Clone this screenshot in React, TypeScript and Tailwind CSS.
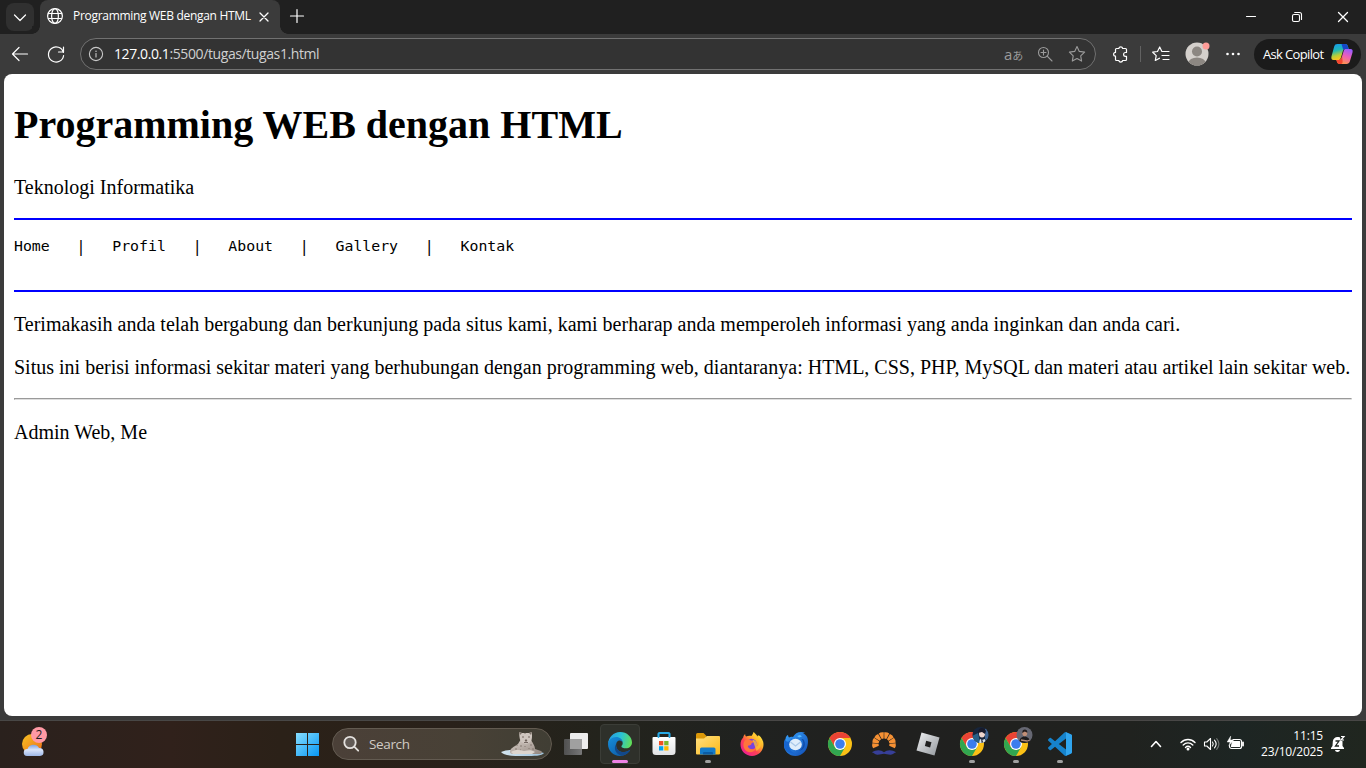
import type { ReactNode } from "react";

const ui = "font-['Open_Sans','Noto_Sans',sans-serif]";

function Line({ size = 20, w = 1.2, color = "#fff", children }: { size?: number; w?: number; color?: string; children: ReactNode }) {
  return (
    <svg width={size} height={size} viewBox={`0 0 ${size} ${size}`} fill="none" stroke={color} strokeWidth={w} strokeLinecap="round" strokeLinejoin="round" className="block shrink-0">
      {children}
    </svg>
  );
}

function TabStrip() {
  return (
    <div className="flex h-[34px] shrink-0 items-start bg-[#202020]">
      <button className="mt-[3px] ml-[6px] flex h-7 w-7 items-center justify-center rounded-lg bg-[#303030]">
        <Line><path d="M4.500 8 10 13.500l5.500-5.500" /></Line>
      </button>
      <div className="relative ml-[6px] flex h-[34px] w-[240px] items-center rounded-t-lg bg-[#3b3b3b]">
        <span className="absolute bottom-0 -left-2 h-2 w-2 bg-[radial-gradient(circle_at_0_0,#202020_7.5px,#3b3b3b_8px)]" />
        <span className="absolute -right-2 bottom-0 h-2 w-2 bg-[radial-gradient(circle_at_100%_0,#202020_7.5px,#3b3b3b_8px)]" />
        <div className="mb-[2px] ml-[5px]">
          <Line>
            <circle cx="10" cy="10" r="7.400" />
            <ellipse cx="10" cy="10" rx="3.400" ry="7.400" />
            <path d="M3.500 7.500h13M3.500 12.500h13" />
          </Line>
        </div>
        <span className={`mb-[2px] ml-[8px] w-[183px] text-[12px] leading-4 tracking-[-0.300px] whitespace-nowrap text-white ${ui}`}>Programming WEB dengan HTML</span>
        <div className="mb-[1px] ml-[2px]">
          <Line size={12} w={1.3}><path d="m2 2 8 8M10 2l-8 8" /></Line>
        </div>
      </div>
      <div className="mt-[6px] ml-[7px]">
        <Line w={1.2}><path d="M10 3.500v13M3.500 10h13" /></Line>
      </div>
      <div className="mt-[7px] mr-[13px] ml-auto flex gap-[26px]">
        <Line w={1.1}><path d="M5.500 9.500h9" /></Line>
        <Line w={1.1}>
          <rect x="5.500" y="7.500" width="7" height="7" rx="1.500" />
          <path d="M7.700 5.500h4.800a2 2 0 0 1 2 2v5" />
        </Line>
        <Line w={1.3}><path d="m5.500 5.500 9 9M14.500 5.500l-9 9" /></Line>
      </div>
    </div>
  );
}

function CopilotLogo() {
  return (
    <svg width="24" height="24" viewBox="0 0 24 24" className="block">
      <defs>
        <linearGradient id="cpA" x1="0" y1="0" x2="0.300" y2="1"><stop stopColor="#1496f5" /><stop offset=".45" stopColor="#22b9b4" /><stop offset=".75" stopColor="#b9ce37" /><stop offset="1" stopColor="#ffc31d" /></linearGradient>
        <linearGradient id="cpB" x1="0.700" y1="0" x2="0.300" y2="1"><stop stopColor="#9b5cff" /><stop offset=".45" stopColor="#ee5eb7" /><stop offset="1" stopColor="#ff9a43" /></linearGradient>
      </defs>
      <path d="M7.500 2h7.500c2 0 2.600 1.300 3.100 3l.6 2h-3.200c-1.500 0-2.300.8-2.700 2.200l-1.800 6.200C10.400 17.500 9.500 18 8 18H3.500C1.600 18 1 16.500 1.500 14.300L4.200 4.600C4.700 2.800 5.700 2 7.500 2Z" fill="url(#cpA)" />
      <path d="M11.500 2H15c2 0 2.600 1.300 3.100 3l.6 2h-3.200c-1 0-1.700.3-2.200 1Z" fill="#1648c7" />
      <path d="M16.500 22H10c-2 0-2.800-1.300-3.300-3l-.3-1H9c1.500 0 2.200-.9 2.600-2.200l1.900-6.400C14 7.600 14.700 7 16.300 7h4.200c2 0 2.500 1.400 2 3.500l-2.600 8.700C19.300 21 18.300 22 16.500 22Z" fill="url(#cpB)" />
      <path d="M6.400 18H9c1.500 0 2.200-.9 2.600-2.200l.5-1.600.5 5.100c.1 1.800-.5 2.700-1.600 2.700h-1c-2 0-2.800-1.300-3.300-3Z" fill="#f4452f" />
    </svg>
  );
}

function Toolbar() {
  return (
    <div className="flex h-10 shrink-0 items-center bg-[#3b3b3b]">
      <div className="ml-[10px]"><Line w={1.2}><path d="M17.500 10h-15M9 3.500 2.500 10 9 16.500" /></Line></div>
      <div className="ml-[16px]"><Line w={1.2}><path d="M17.400 8.500a7.600 7.600 0 1 0 .2 3M17.500 3v5h-5" /></Line></div>
      <div className="ml-[14px] flex h-8 w-[1016px] items-center rounded-full border border-[#717171] bg-[#333333]">
        <div className="ml-[5px]">
          <Line w={1.1} color="#c8c8c8"><circle cx="10" cy="10" r="6.600" /><path d="M10 9.500v3.500" /><path d="M10 7.200v.1" strokeWidth="1.500" /></Line>
        </div>
        <span className={`ml-[8px] text-[14px] leading-5 tracking-[-0.400px] whitespace-nowrap text-[#d0d0d0] ${ui}`}><span className="text-white">127.0.0.1</span>:5500/tugas/tugas1.html</span>
        <div className="mr-[8px] ml-auto flex items-center">
          <span className="mr-[13px] flex w-[18px] items-baseline text-[#9b9b9b]">
            <span className={`text-[15px] leading-5 ${ui}`}>a</span>
            <span className="-mt-px font-['Noto_Sans_CJK_JP',sans-serif] text-[11px] leading-5">あ</span>
          </span>
          <Line color="#9b9b9b" w={1.1}><circle cx="8.500" cy="8.500" r="5" /><path d="m12.200 12.200 4.800 4.800M8.500 6v5M6 8.500h5" /></Line>
          <div className="ml-[12px]"><Line color="#9b9b9b" w={1.1}><path d="m10 2.500 2.300 4.900 5.300.7-3.900 3.700.9 5.300L10 14.500l-4.700 2.600.9-5.300-3.800-3.700 5.300-.7Z" /></Line></div>
        </div>
      </div>
      <div className="ml-[14px]">
        <Line w={1.200}><path d="M6.500 4.500h2.300a2 2 0 0 1 3.900 0h2.800a1 1 0 0 1 1 1v3h-1a1.900 1.900 0 0 0 0 3.800h1v3.200a1 1 0 0 1-1 1h-2.800a2 2 0 0 1-3.900 0H6.500a1 1 0 0 1-1-1v-3.300a1.900 1.900 0 0 1 0-3.800V5.500a1 1 0 0 1 1-1Z" /></Line>
      </div>
      <div className="ml-[10px] h-4 w-px bg-[#626262]" />
      <div className="ml-[10px]">
        <Line w={1.2}><path d="M12.200 7.500h-1.300L8.700 3 6.500 7.500l-4.800.7 3.500 3.400-.9 4.900 4.200-2.300M12.500 7.500h5.500M11 11.500h7M12 15.500h6" /></Line>
      </div>
      <svg width="26" height="26" viewBox="0 0 26 26" className="ml-[13px] block">
        <clipPath id="avatar"><circle cx="13" cy="13" r="11.500" /></clipPath>
        <circle cx="13" cy="13" r="11.500" fill="#d4d0cc" />
        <g clipPath="url(#avatar)" fill="#8c8782"><circle cx="13" cy="10.500" r="5" /><ellipse cx="13" cy="22" rx="8.500" ry="5.500" /></g>
        <circle cx="22" cy="5" r="3.500" fill="#ff9c98" />
      </svg>
      <svg width="20" height="20" viewBox="0 0 20 20" fill="#fff" className="ml-[13px] block"><circle cx="4.500" cy="10" r="1.300" /><circle cx="10" cy="10" r="1.300" /><circle cx="15.500" cy="10" r="1.300" /></svg>
      <div className="ml-[11px] flex h-[31px] w-[107px] items-center rounded-full bg-[#1b1b1b] pl-[9px]">
        <span className={`w-[67px] text-[13px] leading-5 tracking-[-0.650px] whitespace-nowrap text-white ${ui}`}>Ask Copilot</span>
        <CopilotLogo />
      </div>
    </div>
  );
}

function WebPage() {
  const links = ["Home", "Profil", "About", "Gallery", "Kontak"];
  return (
    <div className="mx-1 flex h-[642px] shrink-0 flex-col overflow-hidden rounded-lg bg-white px-[10px] font-['Liberation_Serif',serif] text-[20px] leading-[23px] text-black">
      <h1 className="mt-[28px] text-[40px] leading-[46px] font-bold whitespace-nowrap">Programming WEB dengan HTML</h1>
      <p className="mt-[28px]">Teknologi Informatika</p>
      <hr className="mt-[19px] border-t-2 border-[#0000ff]" />
      <pre className="mt-[16px] h-[54px] font-['DejaVu_Sans_Mono',monospace] text-[14.830px] leading-[19px]">
        {links.map((link, i) => (
          <span key={link}>
            {i > 0 && <>{"   "}<span className="inline-block origin-center scale-y-110">|</span>{"   "}</>}
            {link}
          </span>
        ))}
      </pre>
      <hr className="border-t-2 border-[#0000ff]" />
      <p className="mt-[21px] whitespace-nowrap">Terimakasih anda telah bergabung dan berkunjung pada situs kami, kami berharap anda memperoleh informasi yang anda inginkan dan anda cari.</p>
      <p className="mt-5 whitespace-nowrap">Situs ini berisi informasi sekitar materi yang berhubungan dengan programming web, diantaranya: HTML, CSS, PHP, MySQL dan materi atau artikel lain sekitar web.</p>
      <hr className="mt-[19px] h-[2px] border border-t-[#9a9a9a] border-r-[#eeeeee] border-b-[#dedede] border-l-[#9a9a9a]" />
      <p className="mt-[21px]">Admin Web, Me</p>
    </div>
  );
}

function Art({ children }: { children: ReactNode }) {
  return <svg width="28" height="28" viewBox="0 0 28 28" className="block overflow-visible">{children}</svg>;
}

function ChromeShapes() {
  return (
    <>
      <circle cx="14" cy="14" r="12" fill="#fbc116" />
      <path d="M14 8h10.400A12 12 0 0 0 3.600 8l5.200 9Z" fill="#ea4335" />
      <path d="M3.600 8A12 12 0 0 0 14 26l5.200-9-5.200 3-5.200-3Z" fill="#31a650" />
      <circle cx="14" cy="14" r="6" fill="#fff" />
      <circle cx="14" cy="14" r="4.800" fill="#3b7ded" />
    </>
  );
}

function TaskView() {
  return <Art><defs><linearGradient id="tv"><stop stopColor="#505050" /><stop offset="1" stopColor="#777" /></linearGradient></defs><rect x="8" y="3" width="18" height="16" rx="1" fill="#ededed" /><rect x="2" y="9" width="18" height="16" rx="1" fill="url(#tv)" /><path d="M8 9h12v10H8z" fill="#a0a0a0" /></Art>;
}

function EdgeLogo() {
  return (
    <Art>
      <defs>
        <linearGradient id="edTop" x1="0" y1=".4" x2="1" y2=".6"><stop stopColor="#259be2" /><stop offset=".5" stopColor="#2bc2d4" /><stop offset="1" stopColor="#62df54" /></linearGradient>
        <linearGradient id="edLow" x1="0" y1="0" x2=".8" y2="1"><stop stopColor="#168edb" /><stop offset="1" stopColor="#0d5aa5" /></linearGradient>
      </defs>
      <path d="M2 14C2.500 7 7.500 2 14.200 2 21 2 26 7 26 12.500c0 3.500-2.800 5.800-6 5.800-2.700 0-4.600-.9-4.600-1.900 0-.8 1.300-1 1.300-3.100 0-2.800-2.500-5-5.900-5C6.500 8.300 3.500 11 2 14Z" fill="url(#edTop)" />
      <path d="M2 14c.5-4 3.800-7 8.200-7 3.500 0 6.400 2.200 6.500 5.600-.9-1.600-2.300-2.400-3.800-2-2 .6-3.200 3-2.700 5.800.6 3.800 4.300 6 8 5.700 2.300-.2 4.400-1.100 6.100-2.300C22.200 23.700 18.400 26 14 26 7.300 26 2 20.800 2 14Z" fill="url(#edLow)" />
      <path d="M10 14.200c-2.500 4.200-.8 9.300 5.500 11.600 4-.5 7-2.800 8.800-6-1.700 1.200-3.800 2.100-6.100 2.300-4.500.3-8.500-2.900-8.200-7.900Z" fill="#12488a" />
    </Art>
  );
}

function StoreLogo() {
  return <Art><defs><linearGradient id="st" x2="0" y2="1"><stop stopColor="#fff" /><stop offset="1" stopColor="#e2e3e5" /></linearGradient></defs><path d="M8.500 8V4a1 1 0 0 1 1-1h9a1 1 0 0 1 1 1v4" stroke="#27a9e6" strokeWidth="1.800" fill="none" /><path d="M3.500 7h21a1 1 0 0 1 1 1v13.500c0 2.500-1 3.500-3.500 3.500H6c-2.500 0-3.500-1-3.500-3.500V8a1 1 0 0 1 1-1Z" fill="url(#st)" /><path d="M8.500 3v5M19.500 3v5" stroke="#27a9e6" strokeWidth="1.500" /><path d="M9 11h4.300v4.300H9z" fill="#f15125" /><path d="M14.200 11h4.300v4.300h-4.300z" fill="#7cb82b" /><path d="M9 16.200h4.300v4.300H9z" fill="#00a3ef" /><path d="M14.200 16.200h4.300v4.300h-4.300z" fill="#fdb900" /></Art>;
}

function ExplorerLogo() {
  return <Art><defs><linearGradient id="fo" y2="1"><stop stopColor="#ffe082" /><stop offset="1" stopColor="#fbb917" /></linearGradient></defs><path d="M2 4.500A1.500 1.500 0 0 1 3.500 3h6l3 3v6H2z" fill="#db9808" /><path d="M2 8.500h8l3-2.500h12a1 1 0 0 1 1 1v16.500a1 1 0 0 1-1 1H3a1 1 0 0 1-1-1z" fill="url(#fo)" /><path d="M6 24.500V19a1.500 1.500 0 0 1 1.500-1.500H20a1.500 1.500 0 0 1 1.500 1.500v5.500z" fill="#147bc9" /><path d="M9 24.500V23a1 1 0 0 1 1-1h8a1 1 0 0 1 1 1v1.500z" fill="#0b5ca4" /></Art>;
}

function FirefoxLogo() {
  return <Art><defs><linearGradient id="ff" x1=".9" y1=".1" x2=".2" y2=".9"><stop stopColor="#fff044" /><stop offset=".35" stopColor="#ffad29" /><stop offset=".65" stopColor="#ff4352" /><stop offset="1" stopColor="#ee218d" /></linearGradient></defs><path d="M5.200 7.500c.2-1.500 1-2.800 1.900-3.500 0 1 .4 2 .9 2.600 1.600-.8 3.600-1.100 5.300-.7 1-.5 1.700-2.500 2.300-3.900 1.300 1.500 2.500 2.800 3.500 4.600.9-.2 1.300-1 1.400-1.700 3.300 2.500 5 6 5 9.600 0 6.400-5.200 11.500-11.500 11.500S2.500 20.900 2.500 14.500c0-3 .9-5.300 2.700-7Z" fill="url(#ff)" /><circle cx="13.500" cy="14" r="5.300" fill="#7a42dd" /><path d="M7 10.200c2.500-1.500 4.600-.8 6 .2 1.500.2 3.100.2 3.300.8 0 1.200-2.500 1.300-3 2.500.2 1.800-2.600 1.300-3.500 2.500.9 3.500 5.900 3.900 8.700 1.500-2 5.400-9 6-12 1.300C4.900 16.400 5 12.500 7 10.200Z" fill="#ff743b" /><path d="M14.500 9.700c3.500.2 5.600 3.800 4 7 2.500-1.200 3.400-4.200 1.800-7.200-1.200-2.200-3.600-3.500-4.700-7.500 4.500 4.200 5.800 5.600 6.800 8 1.500 3.900.2 9-3.900 11" fill="#ffc52f" opacity=".75" /></Art>;
}

function ThunderbirdLogo() {
  return <Art><defs><linearGradient id="tb" x2="1" y2="1"><stop stopColor="#38a4ff" /><stop offset="1" stopColor="#104cb4" /></linearGradient></defs><path d="M3.500 9c.3-2 1-3.500 2.500-4 0 1 .3 1.800 1 2.500 1.500-1 3-1 4-.5 2-4 7-6.200 12-4.200l-2 .8c4 1.300 5.400 5.100 4.900 9.500C25.300 20.600 20.500 26 13.500 26 6.700 26 2 21 2 15c0-2.500.5-4.500 1.500-6Z" fill="url(#tb)" /><path d="M3 9c.5 2.500 2 3 4 2.500l4-4.500c-2 3-3.500 5.500-3.500 9 0 4.500 3 7 6 7.500-6 1-11.500-3-11.500-8.500 0-2 .3-4 1-6Z" fill="#1765cf" /><path d="M19.500 9c3 3 2.500 9-2.500 12 6-1 7.500-8 4-12Z" fill="#0b4099" opacity=".7" /><ellipse cx="13.500" cy="14.500" rx="6.300" ry="5.800" fill="#e0edfb" /><path d="m8.500 12 5 4 5-4" fill="none" stroke="#a9c8e9" strokeWidth="1.300" /><path d="m15 6 3-1 2 1.500-3 1Z" fill="#57bdff" /></Art>;
}

function FanLogo() {
  const angles = [-99, -71, -43, -14, 14, 43, 71, 99];
  return <Art><g fill="#f69134">{angles.map((a) => <path key={a} transform={`rotate(${a} 14 14)`} d="m13 8.600-1.600-6q2.600-1.200 5.200 0l-1.600 6Z" />)}</g><path d="M1.800 22.300C6 19.500 11 19.500 14 22.300c3-2.800 8-2.800 12.200 0-2.200.3-2.600 2.400-5.400 2.500-3 .1-4.500-1-6.800-1-2.300 0-3.800 1.100-6.800 1-2.800-.1-3.200-2.200-5.400-2.500Z" fill="#373f98" /></Art>;
}

function RobloxLogo() {
  return <Art><defs><linearGradient id="rb" x2="1" y2="1"><stop stopColor="#f0f1f3" /><stop offset="1" stopColor="#91969b" /></linearGradient></defs><path d="M7.500 2.500 25.500 7.500l-5 18L2.500 20.500Z" fill="url(#rb)" /><path d="m12.200 10.800 5.300 1.400-1.400 5.200-5.200-1.400Z" fill="#202020" /></Art>;
}

function ChromeBlueProfile() {
  return <Art><ChromeShapes /><clipPath id="pb"><circle cx="22.500" cy="5" r="8" /></clipPath><g clipPath="url(#pb)"><path d="M14-4h18v18H14z" fill="#17253c" /><path d="m14 6 6-3 2 9-4 3Z" fill="#285f86" /><path d="m27-2 5 2v12l-5-3Z" fill="#406594" /><ellipse cx="24" cy="3.800" rx="3" ry="3.700" fill="#efd5cd" /><path d="M20 3c0-5 5-7 8-2l-1 3-3-2Z" fill="#191a2a" /><path d="m22 9 2 1 3-1 1 4h-7Z" fill="#dce5ec" /><path d="m23 9 2 2-1 4Z" fill="#242b44" /></g></Art>;
}

function ChromeGrayProfile() {
  return <Art><ChromeShapes /><clipPath id="pg"><circle cx="22.500" cy="5" r="8" /></clipPath><g clipPath="url(#pg)"><path d="M14-4h18v18H14z" fill="#666873" /><path d="M17 14c0-5 2.500-7.500 5.500-7.500s6 2.500 6 7.500Z" fill="#1b1b1c" /><ellipse cx="22.800" cy="3.200" rx="2.400" ry="3" fill="#c18f76" /><path d="M20.300 3c-.6-4.500 5.600-4.500 5-.2l-2.500-1.300Z" fill="#221d1d" /><path d="m19 10 6 1 3-1" stroke="#b08a78" strokeWidth="1.300" /></g></Art>;
}

function CodeLogo() {
  return <Art><g transform="translate(2 2)"><path fill="#1683cc" d="M23.150 2.587 18.210.21a1.494 1.494 0 0 0-1.705.29l-9.460 8.630-4.120-3.128a.999.999 0 0 0-1.276.057L.327 7.261A1 1 0 0 0 .326 8.740L3.899 12 .326 15.260a1 1 0 0 0 .001 1.479L1.650 17.940a.999.999 0 0 0 1.276.057l4.120-3.128 9.460 8.630a1.492 1.492 0 0 0 1.704.290l4.942-2.377A1.500 1.500 0 0 0 24 20.060V3.939a1.500 1.500 0 0 0-.850-1.352zm-5.146 14.861L10.826 12l7.178-5.448v10.896z" /><path d="M18 .2v23.600l5.200-2.400a1.500 1.500 0 0 0 .8-1.300V3.900a1.500 1.500 0 0 0-.8-1.300Z" fill="#30a5ee" /></g></Art>;
}

const apps: { icon: ReactNode; open?: boolean; active?: boolean }[] = [
  { icon: <TaskView /> },
  { icon: <EdgeLogo />, active: true },
  { icon: <StoreLogo /> },
  { icon: <ExplorerLogo />, open: true },
  { icon: <FirefoxLogo /> },
  { icon: <ThunderbirdLogo /> },
  { icon: <Art><ChromeShapes /></Art> },
  { icon: <FanLogo /> },
  { icon: <RobloxLogo /> },
  { icon: <ChromeBlueProfile />, open: true },
  { icon: <ChromeGrayProfile />, open: true },
  { icon: <CodeLogo />, open: true },
];

function Leopard() {
  return (
    <svg width="44" height="26" viewBox="0 0 44 26" className="block">
      <defs><linearGradient id="ice" x2="1"><stop stopColor="#d5e6f0" /><stop offset="1" stopColor="#9fc3dc" /></linearGradient><linearGradient id="fur" x2="1" y2="1"><stop stopColor="#d8cfc8" /><stop offset="1" stopColor="#93877f" /></linearGradient></defs>
      <path d="M0 21c7-3 14-2 20-1 8-1 16 0 23 2-2 3-10 3-19 3C12 25 3 25 0 21Z" fill="url(#ice)" />
      <path d="M9 21c0-4 4-5 8-8l3-5h10c1 4 4 6 4 10l6 2c2 1 1 3-2 3H12c-2 0-3-1-3-2Z" fill="url(#fur)" />
      <path d="m18 1 3 1h7l3-1v5c-.2 4-2 6-6 7-4-1-6-3-6.500-7Z" fill="#cfc6bf" />
      <path d="m18 1 3 1-2 2ZM31 1l-3 1 2 2Z" fill="#7b7068" />
      <path d="M21 6h2M27 6h2M24 9h2l-1 1.500ZM23 11.500h4" stroke="#6b5f58" strokeWidth=".9" fill="#6b5f58" />
      <path d="M16 14v1M20 14v2M30 13v2M14 18h2M31 18h2M19 19h1M24 2v1M28 17v1M24 15v1" stroke="#80746c" strokeWidth=".9" />
      <path d="M10 21c5-3 9-2 13-1 5-1 8-1 11 1l-3 2H12Z" fill="#ddd5cd" />
    </svg>
  );
}

function Taskbar() {
  return (
    <div className="flex h-12 shrink-0 items-center border-t border-[#484746] bg-[linear-gradient(90deg,#2a211d_0px,#2d211c_80px,#30211b_170px,#2b2118_280px,#29211a_450px,#23231c_600px,#202220_750px,#20201f_900px,#20221f_1130px,#1d2523_1240px,#20261f_1366px)] pb-[2px]">
      <div className="relative ml-[20px] h-[34px] w-[28px]">
        <svg width="28" height="34" viewBox="0 0 28 34" className="block">
          <defs><linearGradient id="sun" x2="1" y2="1"><stop stopColor="#f7c323" /><stop offset="1" stopColor="#ed6c18" /></linearGradient><linearGradient id="cloud" x2="0" y2="1"><stop stopColor="#7da0df" /><stop offset=".45" stopColor="#d9e5fb" /><stop offset="1" stopColor="#9db7e7" /></linearGradient></defs>
          <circle cx="12" cy="17" r="10" fill="url(#sun)" />
          <path d="M7 29a3.500 3.500 0 1 1 .5-7A6.300 6.300 0 0 1 19 21a4 4 0 1 1 1 8Z" fill="url(#cloud)" />
        </svg>
        <span className={`absolute top-0 left-[11px] h-4 w-4 rounded-full bg-[#ff99a4] text-center text-[12px] leading-4 text-[#1e1e1e] ${ui}`}>2</span>
      </div>
      <svg width="24" height="24" viewBox="0 0 24 24" className="ml-[247px] block">
        <defs><linearGradient id="win" gradientUnits="userSpaceOnUse" x1="0" y1="0" x2="24" y2="24"><stop stopColor="#8ce1ff" /><stop offset="1" stopColor="#0797f4" /></linearGradient></defs>
        <path d="M1 1h11v11H1zM13 1h11v11H13zM1 13h11v11H1zM13 13h11v11H13z" fill="url(#win)" />
      </svg>
      <div className="ml-[13px] flex h-8 w-[220px] items-center rounded-full border border-[#635b51] bg-[linear-gradient(90deg,#4b4038,#484136_60%,#403e34)]">
        <div className="ml-[8px]"><Line w={1.800} color="#e4e1de"><circle cx="9" cy="8.500" r="5.700" fill="#625b56" /><path d="m13.200 12.700 4 4" /></Line></div>
        <span className={`ml-[8px] text-[13.500px] leading-5 tracking-[-0.350px] text-[#d0cbc5] ${ui}`}>Search</span>
        <div className="mr-[6px] ml-auto"><Leopard /></div>
      </div>
      <div className="ml-[2px] flex">
        {apps.map((app, i) => (
          <div key={i} className="flex h-[45px] w-11 items-center justify-center">
            <div className={app.active ? "relative flex h-10 w-10 items-center justify-center rounded-[4px] border border-[#3b3d37] bg-[#2e302a]" : "relative flex h-10 w-10 items-center justify-center"}>
              {app.icon}
              {app.active && <span className="absolute bottom-0 h-[3px] w-4 rounded-full bg-[#ee82e5]" />}
              {app.open && <span className="absolute bottom-px h-[3px] w-[6px] rounded-full bg-[#a0a0a0]" />}
            </div>
          </div>
        ))}
      </div>
      <div className="ml-[64px] flex items-center">
        <Line w={1.600}><path d="m5.500 12.500 4.500-5 4.500 5" /></Line>
        <div className="ml-[12px]"><Line w={1.400}><path d="M3 8.500c4-4 10-4 14 0M5.200 11c2.800-2.800 6.800-2.800 9.600 0M7.500 13.400c1.500-1.500 3.500-1.500 5 0" /><circle cx="10" cy="15" r=".8" fill="#fff" /></Line></div>
        <div className="ml-[3px]"><Line w={1.100}><path d="M3.500 8h2.300L9.500 4.500v11L5.800 12H3.500ZM11.500 8c1 1.300 1 2.700 0 4M13.500 6.200c2 2.300 2 5.300 0 7.600" /><path d="M15.700 4.700c2.700 3.200 2.700 7.400 0 10.600" stroke="#717574" /></Line></div>
        <div className="ml-[4px]"><Line w={1.200}><path d="M8 5.500h6.500a2 2 0 0 1 2 2v5a2 2 0 0 1-2 2h-8a2 2 0 0 1-2-2v-1" /><path d="M7.500 7.500h7v5h-8Z" fill="#fff" /><path d="M18 8.500v3" strokeWidth="1.800" /><path d="M5.500 2.500 2.200 8h3L4 11.500 8.500 6H5.300Z" fill="#fff" strokeWidth=".5" /></Line></div>
      </div>
      <div className={`mr-[7px] ml-auto text-right text-[12px] leading-4 tracking-[-0.180px] whitespace-nowrap text-white ${ui}`}>
        <div>11:15</div>
        <div>23/10/2025</div>
      </div>
      <svg width="16" height="18" viewBox="0 0 16 18" className="mr-[20px] block">
        <path d="M2.800 6.500C3.200 3.500 5 2 7.500 2c3 0 5 2 5 5v4l1.500 2v1H1v-1l1.500-2ZM5 15h5c-.3 2.500-4.700 2.500-5 0Z" fill="#fff" />
        <path d="M5.500 6h3.500l-3.500 5H9" stroke="#202622" strokeWidth="1.300" fill="none" />
        <path d="M10 0h5.500v6h-5Z" fill="#202622" /><path d="M11 1.500h3l-3 3.500h3" stroke="#fff" strokeWidth="1.200" fill="none" />
      </svg>
    </div>
  );
}

export default function App() {
  return (
    <div className="flex h-screen w-screen flex-col overflow-hidden bg-[#3b3b3b]">
      <TabStrip />
      <Toolbar />
      <WebPage />
      <div className="h-1 shrink-0 bg-[#3b3b3b]" />
      <Taskbar />
    </div>
  );
}
